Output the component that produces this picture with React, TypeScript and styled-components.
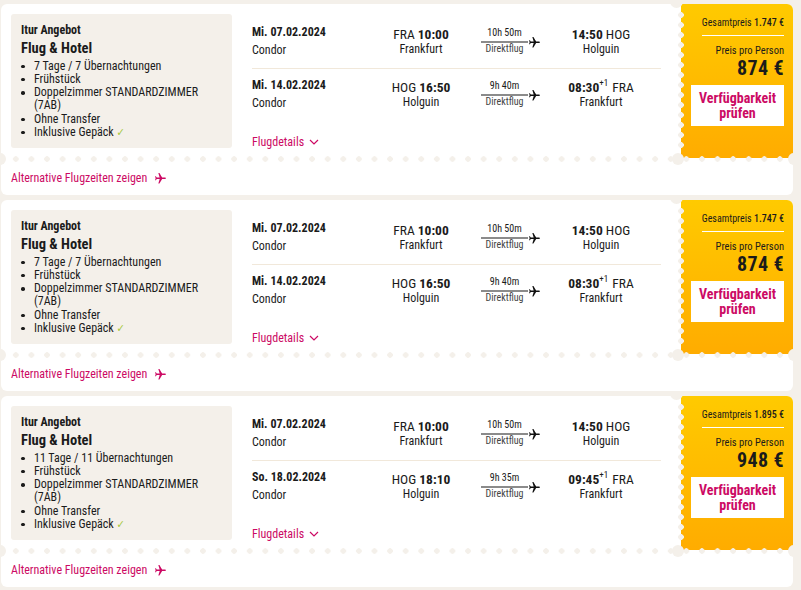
import React from 'react';
import styled, { createGlobalStyle } from 'styled-components';

const BEIGE = '#f4f0ea';
const PINK = '#cc0a64';
const FONT = `"Roboto Condensed", Roboto, "DejaVu Sans Condensed", sans-serif`;

const GlobalStyle = createGlobalStyle`
  html, body { margin: 0; padding: 0; background: ${BEIGE}; }
  body {
    font-family: ${FONT};
    font-stretch: condensed;
    color: #1b1b1b;
    -webkit-font-smoothing: antialiased;
  }
`;

const List = styled.div`
  display: flex;
  flex-direction: column;
  gap: 5px;
  padding: 4px 0 0 1px;
  width: 792px;
`;

const Card = styled.article`
  position: relative;
  background: #fff;
  border-radius: 6px;
  overflow: hidden;
  height: 191px;
  display: flex;
  flex-direction: column;
`;

const Top = styled.div`
  display: flex;
  height: 154px;
`;

const Info = styled.div`
  margin: 10px 0 0 10px;
  width: 221px;
  height: 134px;
  box-sizing: border-box;
  background: ${BEIGE};
  border-radius: 3px;
  padding: 9px 10px 0 10px;
`;

const Kicker = styled.div`
  font-size: 12px;
  line-height: 14px;
  font-weight: 700;
`;

const Title = styled.div`
  margin-top: 4px;
  font-size: 14.5px;
  line-height: 16px;
  font-weight: 700;
`;

const Bullets = styled.ul`
  list-style: none;
  margin: 2.5px 0 0;
  padding: 0;
`;

const Bullet = styled.li`
  position: relative;
  padding-left: 13px;
  font-size: 12px;
  line-height: 13.3px;
  &::before {
    content: '';
    position: absolute;
    left: 0;
    top: 5px;
    width: 3.5px;
    height: 3.5px;
    border-radius: 50%;
    background: #1b1b1b;
  }
`;

const Check = styled.span`
  color: #a6c83c;
  font-family: "DejaVu Sans", sans-serif;
  font-size: 11px;
`;

const Flights = styled.div`
  margin-left: 20px;
  width: 409px;
  padding-top: 12px;
  display: flex;
  flex-direction: column;
`;

const FlightRow = styled.div<{ $divider?: boolean }>`
  display: grid;
  grid-template-columns: 109px 80px 60px 80px;
  column-gap: 20px;
  padding-top: 8px;
  height: 44px;
  border-bottom: ${(p) => (p.$divider ? '1px solid #f1e8da' : 'none')};
`;

const DateCol = styled.div`
  display: flex;
  flex-direction: column;
  gap: 2px;
`;

const DateText = styled.div`
  font-size: 12px;
  line-height: 16px;
  font-weight: 700;
`;

const Airline = styled.div`
  font-size: 12px;
  line-height: 16px;
`;

const Station = styled.div`
  padding-top: 2.5px;
  text-align: center;
  white-space: nowrap;
`;

const TimeLine = styled.div`
  font-size: 13.5px;
  line-height: 15px;
  b { font-weight: 700; }
  sup {
    font-size: 9px;
    line-height: 0;
    vertical-align: 6px;
    margin-right: 1px;
  }
`;

const City = styled.div`
  font-size: 12px;
  line-height: 15px;
`;

const Duration = styled.div`
  padding-top: 3px;
  display: flex;
  flex-direction: column;
`;

const DurText = styled.div<{ $muted?: boolean }>`
  width: 47px;
  text-align: center;
  font-size: 10px;
  line-height: 12px;
  color: ${(p) => (p.$muted ? '#444' : '#1b1b1b')};
  white-space: nowrap;
`;

const Track = styled.div`
  margin-top: 2px;
  height: 2px;
  display: flex;
  align-items: center;
`;

const TrackLine = styled.div`
  width: 47px;
  height: 2px;
  background: #8b8b8b;
`;

const Details = styled.div`
  margin-top: 14px;
  font-size: 12px;
  line-height: 14px;
  color: ${PINK};
  display: flex;
  align-items: center;
  gap: 5px;
`;

const Price = styled.div`
  position: relative;
  margin-left: 20px;
  width: 112px;
  height: 154px;
  box-sizing: border-box;
  padding: 13px 9px 0 10px;
  background: linear-gradient(180deg, #ffca00 0%, #ffac00 100%);
  display: flex;
  flex-direction: column;
  align-items: flex-end;
  &::before {
    content: '';
    position: absolute;
    left: -3px;
    top: 6px;
    width: 6px;
    height: 142px;
    background: radial-gradient(circle at 3px 5px, ${BEIGE} 2.6px, transparent 3.1px);
    background-size: 6px 10px;
    background-repeat: repeat-y;
  }
  &::after {
    content: '';
    position: absolute;
    left: -11px;
    top: -9px;
    width: 13px;
    height: 13px;
    border-radius: 50%;
    background: ${BEIGE};
  }
`;

const Total = styled.div`
  font-size: 10px;
  line-height: 12px;
  white-space: nowrap;
  b { font-weight: 500; }
`;

const PriceRule = styled.div`
  margin-top: 6px;
  width: 82px;
  height: 1px;
  background: #fff;
`;

const PerPerson = styled.div`
  margin-top: 9px;
  font-size: 10.5px;
  line-height: 12px;
`;

const Amount = styled.div`
  margin-top: 1px;
  font-size: 20px;
  line-height: 20px;
  font-weight: 700;
  letter-spacing: 0.4px;
`;

const CheckButton = styled.button`
  margin-top: 7px;
  width: 93px;
  height: 41px;
  border: 0;
  background: #fff;
  color: ${PINK};
  font-family: ${FONT};
  font-stretch: condensed;
  font-size: 14px;
  line-height: 15px;
  font-weight: 700;
  padding: 0;
  cursor: pointer;
`;

const Perforation = styled.div`
  position: relative;
  margin-top: -2px;
  height: 6px;
`;

const Dots = styled.div`
  position: absolute;
  left: 7px;
  right: 0;
  top: 0;
  height: 6px;
  background: radial-gradient(circle at 7.8px 3px, ${BEIGE} 2.5px, transparent 3px);
  background-size: 15.6px 6px;
  background-repeat: repeat-x;
`;

const Notch = styled.span<{ $at: 'left' | 'middle' | 'right' }>`
  position: absolute;
  top: -3px;
  width: 12px;
  height: 12px;
  border-radius: 50%;
  background: ${BEIGE};
  left: ${(p) => (p.$at === 'left' ? '-7px' : p.$at === 'middle' ? '671px' : 'auto')};
  right: ${(p) => (p.$at === 'right' ? '-7px' : 'auto')};
`;

const Bottom = styled.div`
  display: flex;
  padding: 9px 0 0 10px;
`;

const AltLink = styled.a`
  display: flex;
  align-items: center;
  gap: 7px;
  font-size: 12px;
  line-height: 14px;
  color: ${PINK};
  text-decoration: none;
`;

const PlaneIcon = ({ color, size = 13 }: { color: string; size?: number }) => (
  <svg width={size} height={size} viewBox="0 0 24 24" style={{ flex: 'none' }}>
    <path
      transform="rotate(90 12 12)"
      fill={color}
      d="M21 16v-2l-8-5V3.5c0-.83-.67-1.5-1.5-1.5S10 2.67 10 3.5V9l-8 5v2l8-2.5V19l-2 1.5V22l3.5-1 3.5 1v-1.5L13 19v-5.5l8 2.5z"
    />
  </svg>
);

const Chevron = () => (
  <svg width="10" height="6" viewBox="0 0 10 6">
    <polyline points="1,1 5,5 9,1" fill="none" stroke={PINK} strokeWidth="1.2" />
  </svg>
);

type Leg = {
  date: string;
  from: string;
  dep: string;
  fromCity: string;
  dur: string;
  to: string;
  arr: string;
  toCity: string;
  nextDay?: boolean;
};

type Offer = {
  nights: string;
  total: string;
  perPerson: string;
  legs: [Leg, Leg];
};

const outLeg: Leg = {
  date: 'Mi. 07.02.2024',
  from: 'FRA',
  dep: '10:00',
  fromCity: 'Frankfurt',
  dur: '10h 50m',
  to: 'HOG',
  arr: '14:50',
  toCity: 'Holguin',
};

const offers: Offer[] = [
  {
    nights: '7 Tage / 7 Übernachtungen',
    total: '1.747 €',
    perPerson: '874 €',
    legs: [
      outLeg,
      { date: 'Mi. 14.02.2024', from: 'HOG', dep: '16:50', fromCity: 'Holguin', dur: '9h 40m', to: 'FRA', arr: '08:30', toCity: 'Frankfurt', nextDay: true },
    ],
  },
  {
    nights: '7 Tage / 7 Übernachtungen',
    total: '1.747 €',
    perPerson: '874 €',
    legs: [
      outLeg,
      { date: 'Mi. 14.02.2024', from: 'HOG', dep: '16:50', fromCity: 'Holguin', dur: '9h 40m', to: 'FRA', arr: '08:30', toCity: 'Frankfurt', nextDay: true },
    ],
  },
  {
    nights: '11 Tage / 11 Übernachtungen',
    total: '1.895 €',
    perPerson: '948 €',
    legs: [
      outLeg,
      { date: 'So. 18.02.2024', from: 'HOG', dep: '18:10', fromCity: 'Holguin', dur: '9h 35m', to: 'FRA', arr: '09:45', toCity: 'Frankfurt', nextDay: true },
    ],
  },
];

const LegRow = ({ leg, divider }: { leg: Leg; divider?: boolean }) => (
  <FlightRow $divider={divider}>
    <DateCol>
      <DateText>{leg.date}</DateText>
      <Airline>Condor</Airline>
    </DateCol>
    <Station>
      <TimeLine>
        {leg.from} <b>{leg.dep}</b>
      </TimeLine>
      <City>{leg.fromCity}</City>
    </Station>
    <Duration>
      <DurText>{leg.dur}</DurText>
      <Track>
        <TrackLine />
        <PlaneIcon color="#111" size={13} />
      </Track>
      <DurText $muted>Direktflug</DurText>
    </Duration>
    <Station>
      <TimeLine>
        <b>{leg.arr}</b>
        {leg.nextDay ? <sup>+1</sup> : null} {leg.to}
      </TimeLine>
      <City>{leg.toCity}</City>
    </Station>
  </FlightRow>
);

const OfferCard = ({ offer }: { offer: Offer }) => (
  <Card>
    <Top>
      <Info>
        <Kicker>Itur Angebot</Kicker>
        <Title>Flug &amp; Hotel</Title>
        <Bullets>
          <Bullet>{offer.nights}</Bullet>
          <Bullet>Frühstück</Bullet>
          <Bullet>Doppelzimmer STANDARDZIMMER (7AB)</Bullet>
          <Bullet>Ohne Transfer</Bullet>
          <Bullet>
            Inklusive Gepäck <Check>✓</Check>
          </Bullet>
        </Bullets>
      </Info>
      <Flights>
        <LegRow leg={offer.legs[0]} divider />
        <LegRow leg={offer.legs[1]} />
        <Details>
          Flugdetails <Chevron />
        </Details>
      </Flights>
      <Price>
        <Total>
          Gesamtpreis <b>{offer.total}</b>
        </Total>
        <PriceRule />
        <PerPerson>Preis pro Person</PerPerson>
        <Amount>{offer.perPerson}</Amount>
        <CheckButton>
          Verfügbarkeit
          <br />
          prüfen
        </CheckButton>
      </Price>
    </Top>
    <Perforation>
      <Dots />
      <Notch $at="left" />
      <Notch $at="middle" />
      <Notch $at="right" />
    </Perforation>
    <Bottom>
      <AltLink href="#">
        Alternative Flugzeiten zeigen <PlaneIcon color={PINK} size={13} />
      </AltLink>
    </Bottom>
  </Card>
);

export default function App() {
  return (
    <>
      <GlobalStyle />
      <List>
        {offers.map((o, i) => (
          <OfferCard key={i} offer={o} />
        ))}
      </List>
    </>
  );
}
